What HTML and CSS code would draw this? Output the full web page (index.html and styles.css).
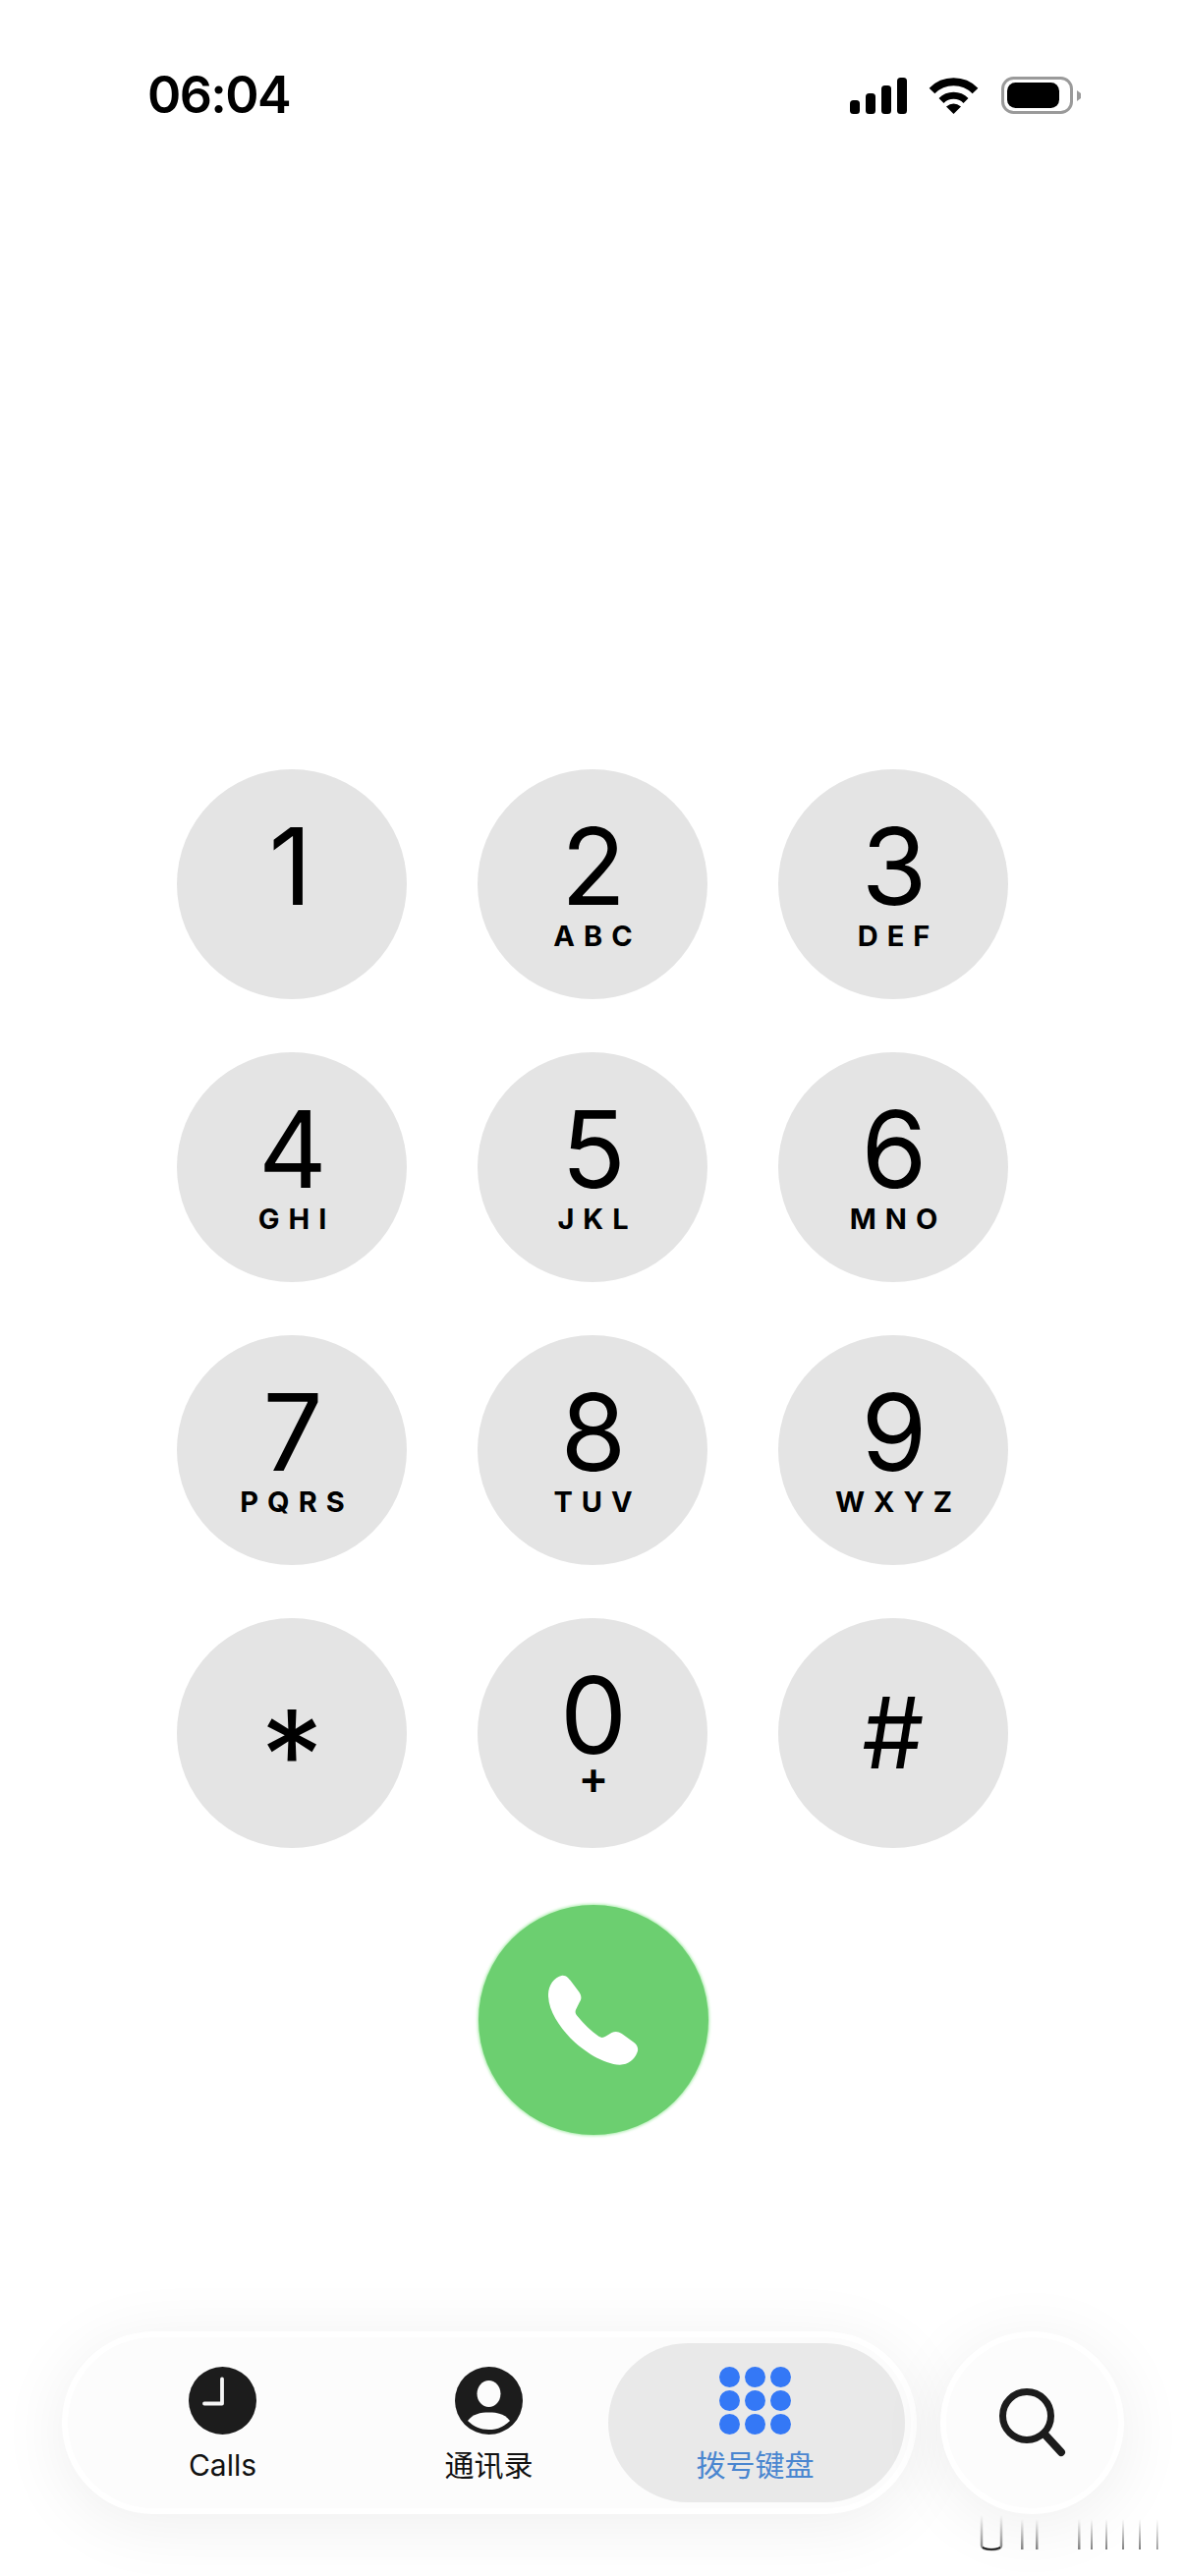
FILE: index.html
```html
<!DOCTYPE html>
<html lang="zh">
<head>
  <meta charset="UTF-8" />
  <meta name="viewport" content="width=device-width, initial-scale=1.0"/>
  <title>Keypad</title>
  <link rel="stylesheet" href="styles.css">
</head>
<body>
  <div class="screen">
    <!-- Status bar -->
    <div class="status-bar">
      <div class="status-time">06:04</div>
      <div class="status-icons">
        <svg class="icon-signal" width="59" height="37" viewBox="0 0 59 37">
          <rect x="0" y="23" width="10" height="14" rx="3.5"/>
          <rect x="16" y="16" width="10" height="21" rx="3.5"/>
          <rect x="32" y="8" width="10" height="29" rx="3.5"/>
          <rect x="48" y="0" width="10" height="37" rx="3.5"/>
        </svg>
        <svg class="icon-wifi" width="51" height="37" viewBox="0 0 51 37">
          <path d="M3.5 13.5A31 31 0 0 1 47.5 13.5" fill="none" stroke="#000" stroke-width="8"/>
          <path d="M13 23.5A17.5 17.5 0 0 1 38 23.5" fill="none" stroke="#000" stroke-width="7"/>
          <path d="M25.5 37L18 29.5Q25.5 23.5 33 29.5Z"/>
        </svg>
        <svg class="icon-battery" width="81" height="38" viewBox="0 0 81 38">
          <rect x="1.5" y="1.5" width="70" height="35" rx="11" fill="none" stroke="#9a9a9a" stroke-width="3"/>
          <rect x="6" y="6" width="53" height="26" rx="8.5"/>
          <path d="M77 14L81 17V22L77 25Z" fill="#9a9a9a"/>
        </svg>
      </div>
    </div>

    <!-- Keypad -->
    <div class="keypad">
      <div class="key"><span class="key-digit key-one">1</span></div>
      <div class="key"><span class="key-digit">2</span><span class="key-letters">ABC</span></div>
      <div class="key"><span class="key-digit">3</span><span class="key-letters">DEF</span></div>
      <div class="key"><span class="key-digit">4</span><span class="key-letters">GHI</span></div>
      <div class="key"><span class="key-digit">5</span><span class="key-letters">JKL</span></div>
      <div class="key"><span class="key-digit">6</span><span class="key-letters">MNO</span></div>
      <div class="key"><span class="key-digit">7</span><span class="key-letters">PQRS</span></div>
      <div class="key"><span class="key-digit">8</span><span class="key-letters">TUV</span></div>
      <div class="key"><span class="key-digit">9</span><span class="key-letters">WXYZ</span></div>
      <div class="key key-symbol"><span class="key-star">*</span></div>
      <div class="key"><span class="key-digit">0</span><span class="key-plus">+</span></div>
      <div class="key key-symbol"><span class="key-hash">#</span></div>
    </div>

    <div class="call-button">
      <svg width="94" height="94" viewBox="350 330 280 280">
        <path fill="#fff" d="M395 335C408 334 414 344 420 350L444 382C454 394 455 406 448 416L437 438C433 446 436 452 441 458C460 482 482 503 506 520C514 525 520 524 528 519L545 509C556 503 566 505 576 512L612 538C623 546 628 558 622 570C614 590 596 606 570 606C520 604 460 565 420 525C385 488 352 440 353 392C354 365 370 340 395 335Z"/>
      </svg>
    </div>

    <!-- Bottom tabs -->
    <div class="bottom-row">
      <div class="tab-bar">
        <div class="tab">
          <svg class="tab-icon" width="69" height="69" viewBox="0 0 69 69">
            <circle cx="34.5" cy="34.5" r="34.5" fill="#1c1c1c"/>
            <path d="M34 12.5V37.5H16" fill="none" stroke="#f6f6f6" stroke-width="3.8" stroke-linecap="round" stroke-linejoin="round"/>
          </svg>
          <span class="tab-label">Calls</span>
        </div>
        <div class="tab">
          <svg class="tab-icon" width="69" height="69" viewBox="0 0 69 69">
            <circle cx="34.5" cy="34.5" r="34.5" fill="#1c1c1c"/>
            <ellipse cx="34.5" cy="27.5" rx="12" ry="13.5" fill="#fcfcfc"/>
            <path d="M13 55C18 48 26 46.5 34.5 46.5C43 46.5 51 48 56 55C50 61 43 64 34.5 64C26 64 19 61 13 55Z" fill="#fcfcfc"/>
          </svg>
          <span class="tab-label">通讯录</span>
        </div>
        <div class="tab tab-active">
          <div class="dots">
            <span></span><span></span><span></span>
            <span></span><span></span><span></span>
            <span></span><span></span><span></span>
          </div>
          <span class="tab-label">拨号键盘</span>
        </div>
      </div>
      <div class="search-button">
        <svg width="72" height="72" viewBox="0 0 72 72">
          <circle cx="30" cy="29" r="24.5" fill="none" stroke="#1c1c1c" stroke-width="7"/>
          <path d="M48 47.500L65 66" fill="none" stroke="#1c1c1c" stroke-width="8" stroke-linecap="round"/>
        </svg>
      </div>
    </div>

    <!-- Smeared home indicator remains below the search button -->
    <svg class="smear" width="190" height="40" viewBox="0 0 190 40">
      <defs>
        <linearGradient id="fade" x1="0" y1="0" x2="0" y2="1">
          <stop offset="0" stop-color="#666" stop-opacity="0"/>
          <stop offset="1" stop-color="#555" stop-opacity="0.75"/>
        </linearGradient>
      </defs>
      <path d="M2 0V31Q2 35 12 35Q22 35 22 31V0" fill="none" stroke="url(#fade)" stroke-width="2.5"/>
      <path d="M3 33Q12 37 21 33" fill="none" stroke="#111" stroke-width="1.5"/>
      <rect x="42" y="4" width="2.500" height="31" fill="url(#fade)"/>
      <rect x="57" y="4" width="2.500" height="31" fill="url(#fade)"/>
      <rect x="100" y="4" width="2.500" height="31" fill="url(#fade)"/>
      <rect x="113" y="4" width="2" height="31" fill="url(#fade)"/>
      <rect x="128" y="4" width="2" height="31" fill="url(#fade)"/>
      <rect x="145" y="4" width="2" height="31" fill="url(#fade)"/>
      <rect x="162" y="4" width="2" height="31" fill="url(#fade)"/>
      <rect x="180" y="4" width="1.500" height="31" fill="url(#fade)"/>
    </svg>
  </div>
</body>
</html>
```

FILE: styles.css
```css
* {
  box-sizing: border-box;
}

body {
  margin: 0;
  background: #fff;
  font-family: Inter, "Noto Sans CJK SC", sans-serif;
  color: #000;
}

.screen {
  position: relative;
  width: 1206px;
  height: 2622px;
  overflow: hidden;
  display: flex;
  flex-direction: column;
  background: #fff;
}

.status-bar {
  display: flex;
  justify-content: space-between;
  align-items: center;
  height: 38px;
  margin-top: 78px;
  padding: 0 106px 0 150px;
}

.status-time {
  font-size: 52px;
  font-weight: 600;
  line-height: 38px;
  letter-spacing: -1.6px;
}

.status-icons {
  display: flex;
  align-items: center;
}

.icon-wifi {
  margin-left: 21px;
}

.icon-battery {
  margin-left: 23px;
}

.keypad {
  display: grid;
  grid-template-columns: repeat(3, 234px);
  justify-content: center;
  column-gap: 72px;
  row-gap: 54px;
  margin-top: 667px;
}

.key {
  width: 234px;
  height: 234px;
  border-radius: 50%;
  background: #e4e4e4;
  display: flex;
  flex-direction: column;
  align-items: center;
  padding-top: 59px;
}

.key-digit {
  padding-left: 2px;
  font-size: 108px;
  line-height: 80px;
}

.key-one {
  padding-left: 0;
  padding-right: 3px;
}

.key-letters {
  margin-top: 16px;
  padding-left: 10px;
  font-size: 29px;
  font-weight: 700;
  line-height: 30px;
  letter-spacing: 9px;
}

.key-plus {
  margin-top: 8px;
  padding-left: 2px;
  font-size: 46px;
  font-weight: 600;
  line-height: 30px;
}

.key-symbol {
  padding-top: 0;
  justify-content: center;
}

.key-star {
  font-size: 128px;
  line-height: 60px;
  padding-top: 46px;
}

.key-hash {
  font-size: 100px;
  line-height: 72px;
}

.call-button {
  align-self: center;
  width: 234px;
  height: 234px;
  margin-top: 58px;
  margin-left: 2px;
  border-radius: 50%;
  background: #6ccf70;
  box-shadow: 0 0 3px 1px #a6eba8;
  display: flex;
  align-items: center;
  justify-content: center;
}

.bottom-row {
  display: flex;
  gap: 24px;
  margin-top: 200px;
  padding-left: 63px;
}

.tab-bar {
  display: flex;
  width: 870px;
  height: 186px;
  padding: 6px 6px 6px 22px;
  border: 6px solid #fff;
  border-radius: 93px;
  background: #fcfcfc;
  box-shadow: 0 10px 70px rgba(0, 0, 0, 0.07);
}

.tab {
  width: 271px;
  height: 162px;
  padding-top: 24px;
  display: flex;
  flex-direction: column;
  align-items: center;
}

.tab-active {
  width: 302px;
  margin-left: -14px;
  border-radius: 81px;
  background: #e9e9e9;
}

.tab-label {
  margin-top: 13px;
  font-size: 30px;
  line-height: 36px;
  color: #111;
}

.tab-active .tab-label {
  padding-right: 3px;
  color: #4a86d0;
}

.dots {
  display: grid;
  grid-template-columns: repeat(3, 21px);
  grid-auto-rows: 21px;
  column-gap: 5px;
  row-gap: 3px;
  margin-right: 3px;
}

.dots span {
  border-radius: 50%;
  background: #3478f6;
}

.search-button {
  width: 187px;
  height: 186px;
  border: 6px solid #fff;
  border-radius: 50%;
  background: #fcfcfc;
  box-shadow: 0 10px 70px rgba(0, 0, 0, 0.07);
  display: flex;
  align-items: center;
  justify-content: center;
}

.smear {
  position: absolute;
  left: 997px;
  top: 2560px;
}
```
